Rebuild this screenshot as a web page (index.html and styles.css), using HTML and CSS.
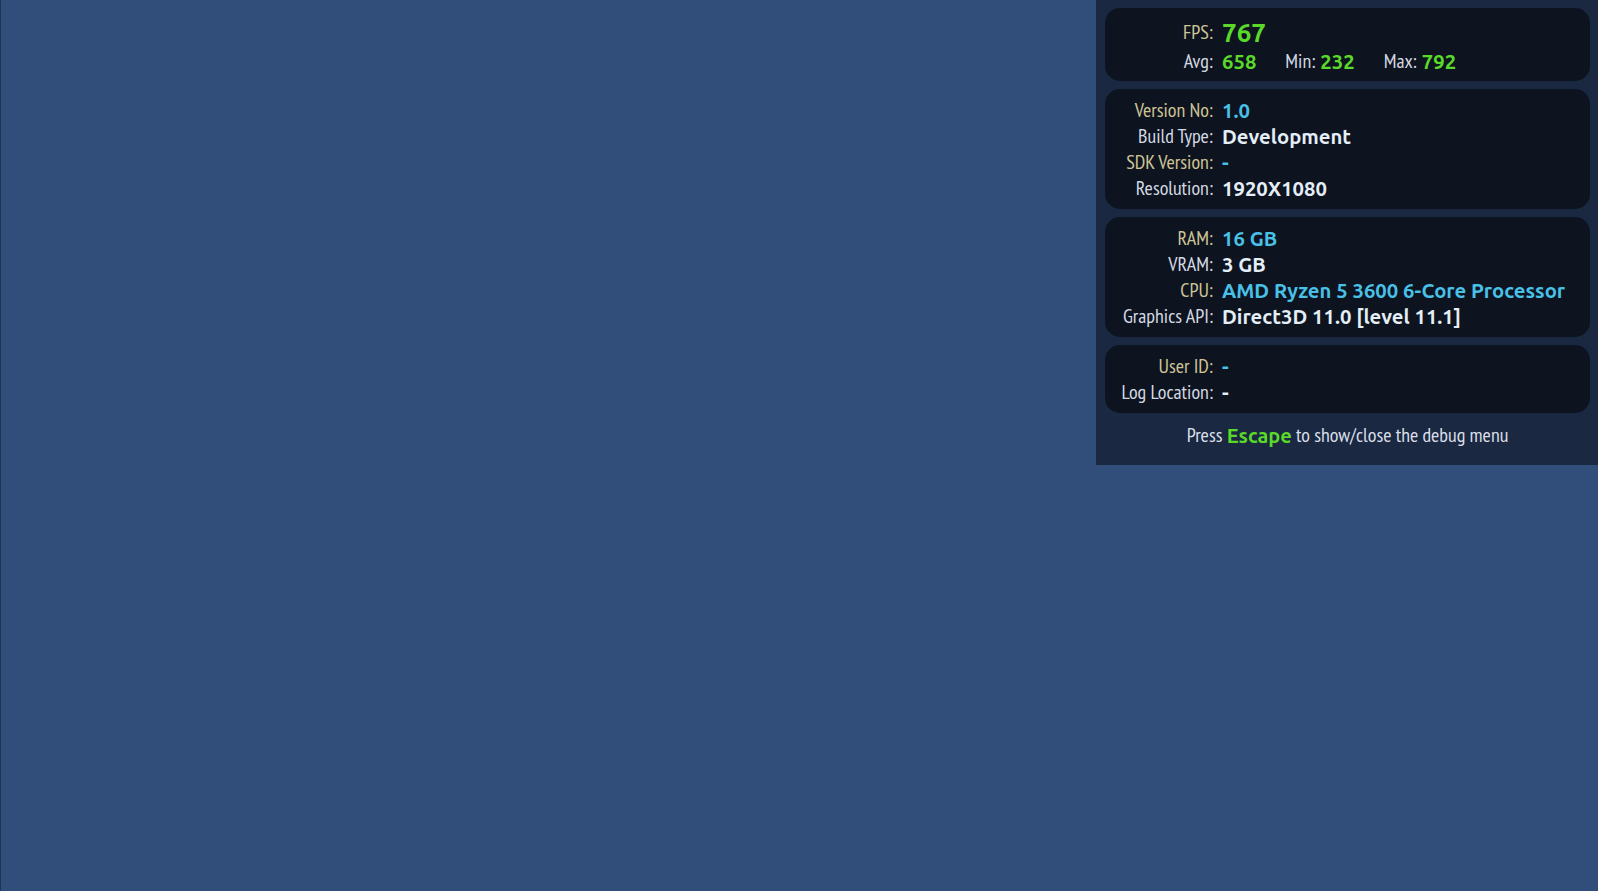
FILE: index.html
```html
<!DOCTYPE html>
<html>
<head>
<meta charset="utf-8">
<link rel="stylesheet" href="styles.css">
</head>
<body>
<div class="screen">
  <aside class="debug">
    <section class="card">
      <div class="row fps">
        <span class="lbl tan">FPS:</span>
        <span class="val green big">767</span>
      </div>
      <div class="row">
        <span class="lbl">Avg:</span>
        <span class="stats">
          <span class="val green">658</span>
          <span class="lbl inline">Min:</span><span class="val green">232</span>
          <span class="lbl inline">Max:</span><span class="val green">792</span>
        </span>
      </div>
    </section>
    <section class="card">
      <div class="row"><span class="lbl tan">Version No:</span><span class="val cyan">1.0</span></div>
      <div class="row"><span class="lbl">Build Type:</span><span class="val white">Development</span></div>
      <div class="row"><span class="lbl tan">SDK Version:</span><span class="val cyan">-</span></div>
      <div class="row"><span class="lbl">Resolution:</span><span class="val white">1920X1080</span></div>
    </section>
    <section class="card">
      <div class="row"><span class="lbl tan">RAM:</span><span class="val cyan">16 GB</span></div>
      <div class="row"><span class="lbl">VRAM:</span><span class="val white">3 GB</span></div>
      <div class="row"><span class="lbl tan">CPU:</span><span class="val cyan">AMD Ryzen 5 3600 6-Core Processor</span></div>
      <div class="row"><span class="lbl">Graphics API:</span><span class="val white">Direct3D 11.0 [level 11.1]</span></div>
    </section>
    <section class="card">
      <div class="row"><span class="lbl tan">User ID:</span><span class="val cyan">-</span></div>
      <div class="row"><span class="lbl">Log Location:</span><span class="val white">-</span></div>
    </section>
    <p class="hint">Press <b class="green">Escape</b> to show/close the debug menu</p>
  </aside>
</div>
</body>
</html>
```

FILE: styles.css
```css
html, body {
  margin: 0;
  padding: 0;
  height: 100%;
}
body {
  background: #304e79;
  font-family: "PT Sans Narrow", "Open Sans", sans-serif;
  font-stretch: 75%;
}
.screen {
  height: 100%;
  display: flex;
  justify-content: flex-end;
  align-items: flex-start;
  border-left: 1px solid #1f3556;
  box-sizing: border-box;
}
.debug {
  width: 502px;
  background: #1a2841;
  padding: 8px 8px 16px 9px;
  box-sizing: border-box;
  display: flex;
  flex-direction: column;
  gap: 8px;
}
.card {
  background: #0d131f;
  border-radius: 15px;
  padding: 8px 0;
  display: flex;
  flex-direction: column;
}
.card:first-child {
  padding-bottom: 7px;
}
.row {
  display: flex;
  align-items: center;
  height: 26px;
}
.row.fps {
  height: 32px;
}
.lbl {
  width: 108px;
  flex: none;
  text-align: right;
  font-size: 20px;
  color: #d3d9e2;
  padding-right: 9px;
  box-sizing: content-box;
  white-space: nowrap;
}
.lbl.tan { color: #cec496; }
.lbl.inline {
  width: auto;
  padding-right: 5px;
  margin-left: 29px;
}
.stats {
  display: flex;
  align-items: center;
}
.val {
  font-family: "Ubuntu", "Open Sans", sans-serif;
  font-stretch: normal;
  font-weight: 700;
  font-size: 20.3px;
  white-space: nowrap;
}
.val.big { font-size: 26px; }
.green { color: #5bd92b; }
.cyan { color: #49c1e7; }
.white { color: #e4eef7; }
.hint {
  margin: 0;
  height: 28px;
  display: flex;
  align-items: center;
  justify-content: center;
  font-size: 20px;
  color: #d9dfe8;
  white-space: pre;
}
.hint b {
  font-family: "Ubuntu", "Open Sans", sans-serif;
  font-stretch: normal;
  font-size: 20px;
}
```
